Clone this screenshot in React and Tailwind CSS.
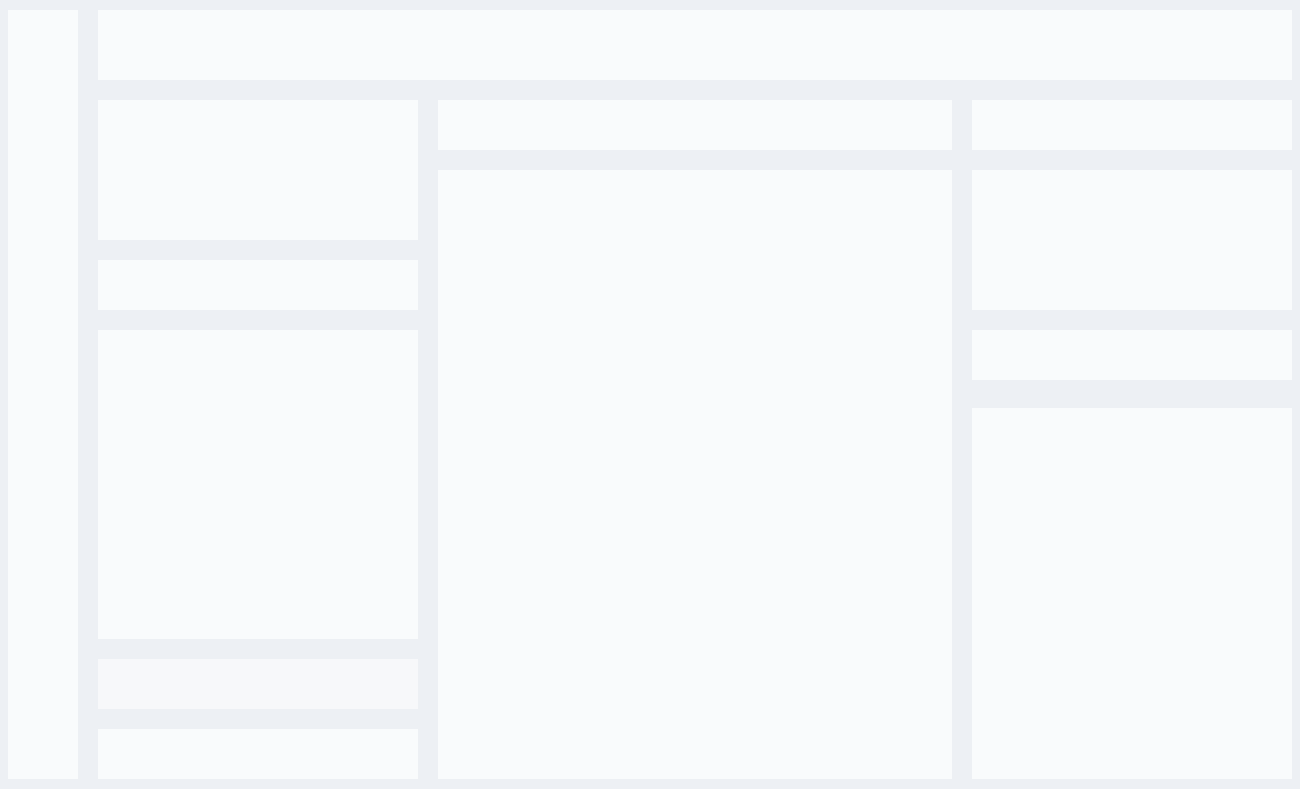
export default function App() {
  const panel = "bg-[#f9fbfc]";
  return (
    <div className="flex h-[789px] w-[1300px] gap-5 bg-[#edf0f4] px-2 py-[10px]">
      {/* Sidebar */}
      <aside className={`w-[70px] shrink-0 ${panel}`} />

      <div className="flex flex-1 flex-col gap-5">
        {/* Header */}
        <header className={`h-[70px] shrink-0 ${panel}`} />

        <div className="flex min-h-0 flex-1 gap-5">
          {/* Left column */}
          <div className="flex w-[320px] shrink-0 flex-col gap-5">
            <div className={`h-[140px] shrink-0 ${panel}`} />
            <div className={`h-[50px] shrink-0 ${panel}`} />
            <div className={`flex-1 ${panel}`} />
            <div className="h-[50px] shrink-0 bg-[#f7f8fa]" />
            <div className={`h-[50px] shrink-0 ${panel}`} />
          </div>

          {/* Middle column */}
          <div className="flex flex-1 flex-col gap-5">
            <div className={`h-[50px] shrink-0 ${panel}`} />
            <div className={`flex-1 ${panel}`} />
          </div>

          {/* Right column */}
          <div className="flex w-[320px] shrink-0 flex-col">
            <div className={`h-[50px] shrink-0 ${panel}`} />
            <div className={`mt-5 h-[140px] shrink-0 ${panel}`} />
            <div className={`mt-5 h-[50px] shrink-0 ${panel}`} />
            <div className={`mt-7 flex-1 ${panel}`} />
          </div>
        </div>
      </div>
    </div>
  );
}
